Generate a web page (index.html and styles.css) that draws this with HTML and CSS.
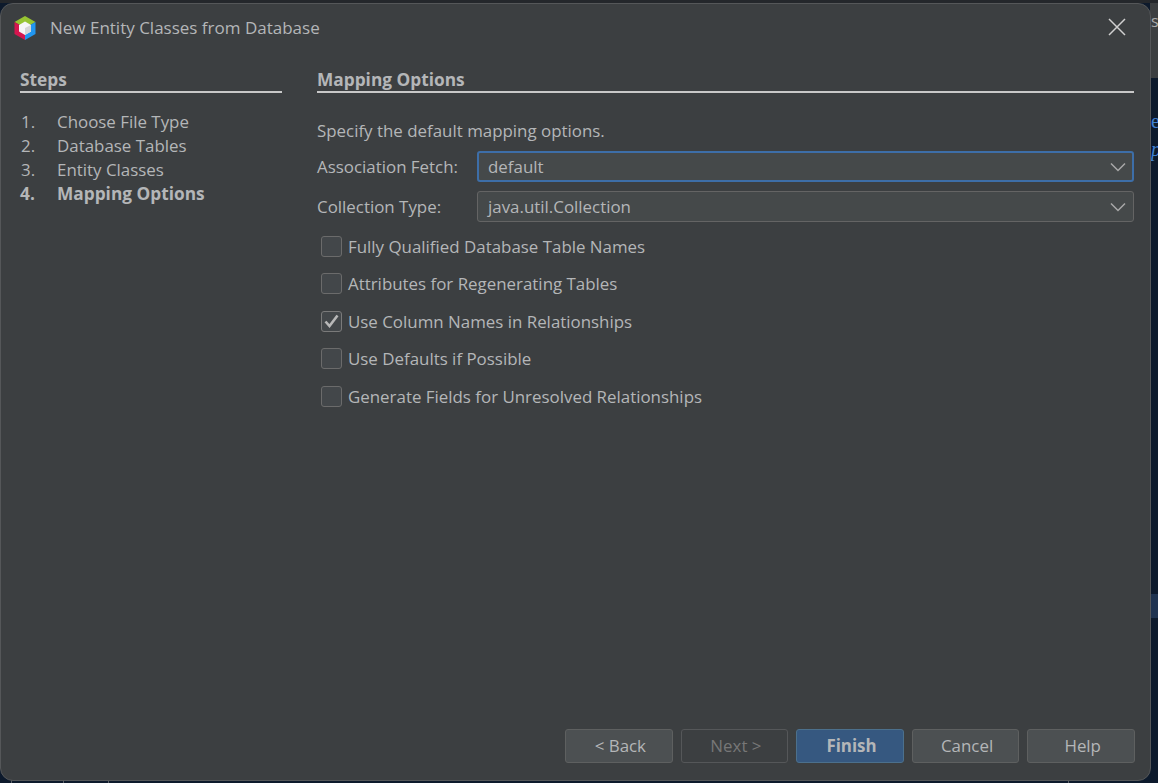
FILE: index.html
```html
<!DOCTYPE html>
<html lang="en">
<head>
<meta charset="utf-8">
<title>New Entity Classes from Database</title>
<link rel="stylesheet" href="styles.css">
</head>
<body>
<div class="backdrop">
  <span class="scrap scrap-s">s</span>
  <span class="scrap scrap-e">e</span>
  <span class="scrap scrap-p">p</span>
  <i class="panel-right"></i>
  <i class="stripe"></i>
  <i class="tick t1"></i><i class="tick t2"></i><i class="tick t3"></i><i class="tick t4"></i>
  <i class="tick-top"></i>
</div>
<div class="dialog">
  <header class="titlebar">
    <svg class="logo" width="24" height="26" viewBox="0 0 24 26" aria-hidden="true">
      <path fill="#97c432" d="M12 1 22.5 7 12 13 1.5 7z"/>
      <path fill="#d5164f" d="M1.5 7 12 13v12L1.5 19z"/>
      <path fill="#2196f0" d="M22.5 7 12 13v12l10.500-6z"/>
      <path fill="#f6f6f6" d="M12 6.500 18 10v6.500L12 20l-6-3.500V10z"/>
      <path fill="#d6d6d6" d="M12 13l6-3v6.500L12 20z"/>
    </svg>
    <span class="title">New Entity Classes from Database</span>
    <svg class="close" width="18" height="18" viewBox="0 0 18 18" aria-hidden="true">
      <path d="M1 1 17 17M17 1 1 17" stroke="#d0d0d0" stroke-width="1.500" fill="none"/>
    </svg>
  </header>
  <div class="content">
    <aside class="steps">
      <h2 class="heading">Steps</h2>
      <ol class="step-list">
        <li class="step"><span class="num">1.</span>Choose File Type</li>
        <li class="step"><span class="num">2.</span>Database Tables</li>
        <li class="step"><span class="num">3.</span>Entity Classes</li>
        <li class="step current"><span class="num">4.</span>Mapping Options</li>
      </ol>
    </aside>
    <main class="panel">
      <h2 class="heading">Mapping Options</h2>
      <p class="intro">Specify the default mapping options.</p>
      <div class="form-row">
        <label class="field-label">Association Fetch:</label>
        <div class="combo focused"><span>default</span>
          <svg class="chev" width="16" height="10" viewBox="0 0 16 10" aria-hidden="true"><path d="M1 1.500 8 8.500 15 1.500" stroke="#a8a8a8" stroke-width="1.500" fill="none"/></svg>
        </div>
      </div>
      <div class="form-row">
        <label class="field-label">Collection Type:</label>
        <div class="combo"><span>java.util.Collection</span>
          <svg class="chev" width="16" height="10" viewBox="0 0 16 10" aria-hidden="true"><path d="M1 1.500 8 8.500 15 1.500" stroke="#a8a8a8" stroke-width="1.500" fill="none"/></svg>
        </div>
      </div>
      <div class="checks">
        <div class="check"><span class="box"></span>Fully Qualified Database Table Names</div>
        <div class="check"><span class="box"></span>Attributes for Regenerating Tables</div>
        <div class="check"><span class="box checked"><svg width="15" height="14" viewBox="0 0 15 14" aria-hidden="true"><path d="M1.500 7.500 5.500 12 13.500 1.500" stroke="#b8b8b8" stroke-width="2.600" fill="none"/></svg></span>Use Column Names in Relationships</div>
        <div class="check"><span class="box"></span>Use Defaults if Possible</div>
        <div class="check"><span class="box"></span>Generate Fields for Unresolved Relationships</div>
      </div>
    </main>
  </div>
  <footer class="buttons">
    <button class="btn">&lt; Back</button>
    <button class="btn disabled">Next &gt;</button>
    <button class="btn primary">Finish</button>
    <button class="btn">Cancel</button>
    <button class="btn">Help</button>
  </footer>
</div>
</body>
</html>
```
FILE: styles.css
```css
* { box-sizing: border-box; }
html, body { margin: 0; height: 100%; }
body {
  width: 1158px;
  height: 783px;
  overflow: hidden;
  position: relative;
  background: #0d1a2c;
  font-family: "Open Sans", "Noto Sans", sans-serif;
  font-size: 16.900px;
  color: #b4b6b8;
}
.backdrop { position: absolute; inset: 0; }
.backdrop > * { position: absolute; }
.panel-right { left: 1150px; top: 0; width: 8px; height: 78px; background: #3c3f41; }
.tick-top { left: 0; top: 0; width: 1158px; height: 3px; background: #24272b; }
.stripe { left: 1150px; top: 594px; width: 8px; height: 24px; background: #1f3350; }
.tick { bottom: 0; width: 1px; height: 3px; background: #5a6068; }
.t1 { left: 11px; } .t2 { left: 63px; } .t3 { left: 108px; } .t4 { left: 1068px; }
.scrap { font-family: "Liberation Serif", serif; font-size: 20px; color: #3f7fd0; left: 1151px; }
.scrap-s { top: 10px; color: #aaaaaa; font-family: "Open Sans", sans-serif; font-size: 16px; z-index: 1; }
.scrap-e { top: 110px; }
.scrap-p { top: 138px; font-style: italic; }

.dialog {
  position: relative;
  margin-top: 3px;
  width: 1151px;
  height: 778px;
  background: #3c3f41;
  border: 1px solid #555759;
  border-radius: 13px;
  display: flex;
  flex-direction: column;
}
.titlebar {
  display: flex;
  align-items: center;
  height: 48px;
  padding-left: 12px;
  flex: none;
}
.logo { margin-right: 13px; }
.title { font-size: 17px; line-height: 24px; margin-top: -1px; }
.close { margin-left: auto; margin-right: 24px; margin-top: -2px; }

.content { display: flex; flex: 1; padding: 18px 16px 0 19px; }
.steps { width: 262px; flex: none; margin-right: 35px; }
.panel { flex: 1; }
.heading {
  margin: 0;
  font-size: 17.300px;
  font-weight: 700;
  line-height: 20px;
  border-bottom: 2px solid #c8c8c8;
  height: 23px;
}
.step-list { list-style: none; margin: 17px 0 0; padding: 0; }
.step { line-height: 24px; display: flex; }
.num { width: 37px; padding-left: 1px; flex: none; }
.current { font-weight: 700; font-size: 17.300px; }
.current .num { padding-left: 0; }

.intro { margin: 27px 0 0; line-height: 22px; }
.form-row { display: flex; align-items: center; margin-top: 9px; }
.field-label { width: 160px; flex: none; }
.combo {
  flex: 1;
  height: 31px;
  background: #45494a;
  border: 1px solid #646464;
  border-radius: 3px;
  display: flex;
  align-items: center;
  justify-content: space-between;
  padding: 0 7px 0 10px;
}
.combo.focused { border: 2px solid #3d6ea8; padding: 0 6px 0 9px; }

.checks { display: flex; flex-direction: column; gap: 15.500px; margin-top: 13px; padding-left: 4px; }
.check { display: flex; align-items: center; height: 22px; }
.box {
  width: 21px;
  height: 21px;
  margin-right: 6px;
  background: #43474a;
  border: 1px solid #6b6b6b;
  border-radius: 3px;
  display: flex;
  align-items: center;
  justify-content: center;
}
.box.checked { border-color: #7a7a7a; }

.buttons { display: flex; justify-content: flex-end; gap: 8px; padding: 0 15px 17px 0; flex: none; }
.btn {
  width: 107.600px;
  height: 34px;
  font: inherit;
  color: #b4b6b8;
  background: #4c5052;
  border: 1px solid #5e6060;
  border-radius: 3px;
  padding: 0 0 2px 3px;
}
.btn.disabled { background: #3c3f41; color: #777777; border-color: #555759; }
.btn.primary { background: #365880; border-color: #4c708c; font-weight: 700; }
```
